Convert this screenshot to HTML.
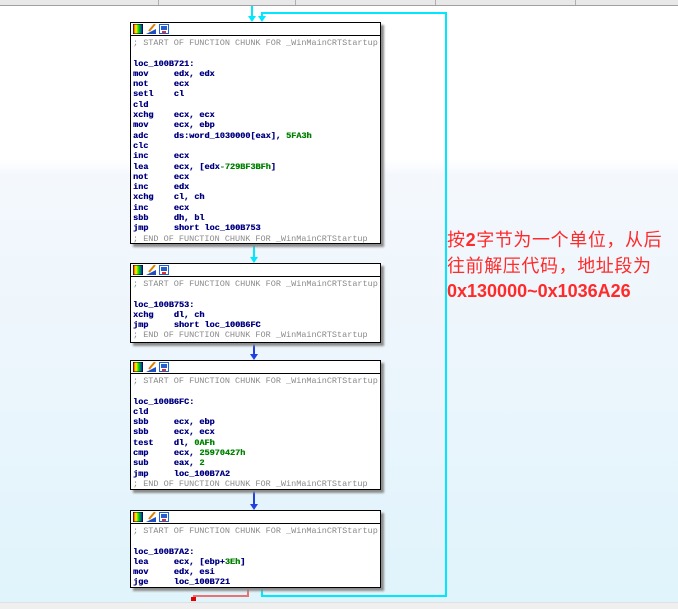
<!DOCTYPE html>
<html><head><meta charset="utf-8"><style>
*{margin:0;padding:0;box-sizing:border-box}
body{width:678px;height:609px;overflow:hidden;position:relative;background:linear-gradient(to bottom,#ffffff 0px,#ffffff 160px,#f4f8fd 175px,#eaf5fc 400px,#e0f4fb 600px);font-family:"Liberation Mono",monospace}
.top{position:absolute;left:0;top:0;width:678px;height:6px;background:#e8e8e8;border-bottom:1px solid #a0a0a0}
.top i{position:absolute;top:0;width:1px;height:5px;background:#b0b0b0}
.bot{position:absolute;left:0;top:602px;width:678px;height:7px;background:#efefef;border-top:1px solid #e0e0e0}
.box{position:absolute;left:130px;width:251px;background:#fff;border:1px solid #000;box-shadow:3px 3px 2px #8c8c8c}
.hd{height:13px;border-bottom:1px solid #000;position:relative}
.ic{position:absolute;top:1px;width:10px;height:10px}
.code{padding:2px 0 0 2px;font-size:8.5px;line-height:10.3px;color:#000080;font-weight:bold;white-space:pre;text-shadow:0.3px 0 0 currentColor}
.c{color:#8a8a8a;font-weight:normal;text-shadow:none}
.g{color:#008000}
.txt{position:absolute;left:447px;top:228px;color:#ff2a2a;font-size:18px;line-height:25.5px;font-family:"Liberation Sans","Noto Sans CJK SC",sans-serif;white-space:nowrap}
</style></head><body>
<div class="top"><i style="left:158px"></i><i style="left:295px"></i><i style="left:435px"></i><i style="left:575px"></i></div>
<svg width="678" height="609" style="position:absolute;left:0;top:0">
<g fill="none" stroke-width="2">
<path d="M252 6V18" stroke="#00e8ff"/>
<path d="M262 20V13H446V596H262V589" stroke="#00e8ff"/>
<path d="M254 244V258" stroke="#00e8ff"/>
<path d="M254 343V355" stroke="#2040e0"/>
<path d="M254 490V505" stroke="#2040e0"/>
<path d="M248 588V596H194V599" stroke="#f07070"/>
</g>
<path d="M248 16l4 6 4-6z" fill="#00e8ff"/>
<path d="M258 16l4 6 4-6z" fill="#00e8ff"/>
<path d="M250 257l4 6 4-6z" fill="#00e8ff"/>
<path d="M250 354l4 6 4-6z" fill="#2040e0"/>
<path d="M250 504l4 6 4-6z" fill="#2040e0"/>
<rect x="191" y="597" width="5" height="4" fill="#e00000"/>
</svg>
<div class="box" style="top:22px;height:222px"><div class="hd">
<svg class="ic" style="left:2px"><defs><linearGradient id="r" x1="0" x2="1"><stop offset="0" stop-color="#f00"/><stop offset=".3" stop-color="#ff0"/><stop offset=".6" stop-color="#0c0"/><stop offset="1" stop-color="#00f"/></linearGradient></defs><rect width="10" height="10" fill="url(#r)" stroke="#000"/></svg>
<svg class="ic" style="left:15px"><path d="M0 10h10V5z" fill="#2050c0"/><path d="M3 7l6-7" stroke="#e08000" stroke-width="2"/></svg>
<svg class="ic" style="left:28px"><rect x=".5" y=".5" width="9" height="9" fill="#fff" stroke="#2060d0"/><rect x="2" y="2" width="6" height="4" fill="#2060d0"/><rect x="3" y="7" width="4" height="2" fill="#e03030"/></svg>
</div><div class="code"><span class="c">; START OF FUNCTION CHUNK FOR _WinMainCRTStartup</span>

loc_100B721:
mov     edx, edx
not     ecx
setl    cl
cld
xchg    ecx, ecx
mov     ecx, ebp
adc     ds:word_1030000[eax], <span class="g">5FA3h</span>
clc
inc     ecx
lea     ecx, [edx<span class="g">-729BF3BFh</span>]
not     ecx
inc     edx
xchg    cl, ch
inc     ecx
sbb     dh, bl
jmp     short loc_100B753
<span class="c">; END OF FUNCTION CHUNK FOR _WinMainCRTStartup</span></div></div>

<div class="box" style="top:263px;height:80px"><div class="hd">
<svg class="ic" style="left:2px"><rect width="10" height="10" fill="url(#r)" stroke="#000"/></svg>
<svg class="ic" style="left:15px"><path d="M0 10h10V5z" fill="#2050c0"/><path d="M3 7l6-7" stroke="#e08000" stroke-width="2"/></svg>
<svg class="ic" style="left:28px"><rect x=".5" y=".5" width="9" height="9" fill="#fff" stroke="#2060d0"/><rect x="2" y="2" width="6" height="4" fill="#2060d0"/><rect x="3" y="7" width="4" height="2" fill="#e03030"/></svg>
</div><div class="code"><span class="c">; START OF FUNCTION CHUNK FOR _WinMainCRTStartup</span>

loc_100B753:
xchg    dl, ch
jmp     short loc_100B6FC
<span class="c">; END OF FUNCTION CHUNK FOR _WinMainCRTStartup</span></div></div>

<div class="box" style="top:360px;height:130px"><div class="hd">
<svg class="ic" style="left:2px"><rect width="10" height="10" fill="url(#r)" stroke="#000"/></svg>
<svg class="ic" style="left:15px"><path d="M0 10h10V5z" fill="#2050c0"/><path d="M3 7l6-7" stroke="#e08000" stroke-width="2"/></svg>
<svg class="ic" style="left:28px"><rect x=".5" y=".5" width="9" height="9" fill="#fff" stroke="#2060d0"/><rect x="2" y="2" width="6" height="4" fill="#2060d0"/><rect x="3" y="7" width="4" height="2" fill="#e03030"/></svg>
</div><div class="code"><span class="c">; START OF FUNCTION CHUNK FOR _WinMainCRTStartup</span>

loc_100B6FC:
cld
sbb     ecx, ebp
sbb     ecx, ecx
test    dl, <span class="g">0AFh</span>
cmp     ecx, <span class="g">25970427h</span>
sub     eax, <span class="g">2</span>
jmp     loc_100B7A2
<span class="c">; END OF FUNCTION CHUNK FOR _WinMainCRTStartup</span></div></div>

<div class="box" style="top:510px;height:78px"><div class="hd">
<svg class="ic" style="left:2px"><rect width="10" height="10" fill="url(#r)" stroke="#000"/></svg>
<svg class="ic" style="left:15px"><path d="M0 10h10V5z" fill="#2050c0"/><path d="M3 7l6-7" stroke="#e08000" stroke-width="2"/></svg>
<svg class="ic" style="left:28px"><rect x=".5" y=".5" width="9" height="9" fill="#fff" stroke="#2060d0"/><rect x="2" y="2" width="6" height="4" fill="#2060d0"/><rect x="3" y="7" width="4" height="2" fill="#e03030"/></svg>
</div><div class="code"><span class="c">; START OF FUNCTION CHUNK FOR _WinMainCRTStartup</span>

loc_100B7A2:
lea     ecx, [ebp+<span class="g">3Eh</span>]
mov     edx, esi
jge     loc_100B721</div></div>

<div class="txt"><span style="letter-spacing:0.6px">按<b>2</b>字节为一个单位，从后</span><br><span style="letter-spacing:0.6px">往前解压代码，地址段为</span><br><b>0x130000~0x1036A26</b></div>
<div class="bot"></div>
</body></html>
